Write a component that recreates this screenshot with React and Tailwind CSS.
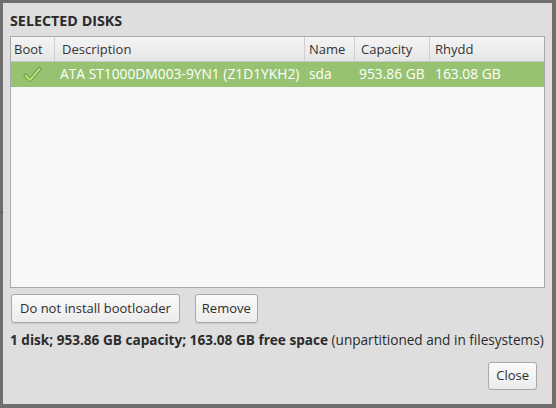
export default function App() {
  const font = { fontFamily: '"Open Sans", "Noto Sans", sans-serif' };
  return (
    <div className="w-[556px] h-[408px] bg-[#6e6e6e] overflow-hidden relative" style={font}>
      <div className="absolute left-0 top-[212px] w-[3px] h-[1px] bg-[#555]" />
      <div className="ml-[3px] mt-[3px] w-[549px] h-[401px] bg-[#dedede] flex flex-col text-[13px] text-[#2e2e2e]">
        <div className="pl-[7px] pt-[8px] h-[33px] font-bold text-[14.3px] leading-[19px] text-[#2b2b2b]">SELECTED DISKS</div>
        <div className="ml-[7px] w-[535px] h-[252px] border border-[#a9a9a9] bg-[#f7f7f7] flex flex-col">
          <div className="flex h-[25px] border-b border-[#c8c8c8] bg-gradient-to-b from-[#f4f4f4] to-[#e6e6e6] text-[#333] leading-[24px]">
            <div className="w-[44px] pl-[3px] border-r border-[#cfcfcf]">Boot</div>
            <div className="w-[250px] pl-[7px] border-r border-[#cfcfcf]">Description</div>
            <div className="w-[50px] pl-[4px] border-r border-[#cfcfcf]">Name</div>
            <div className="w-[75px] pl-[6px] border-r border-[#cfcfcf]">Capacity</div>
            <div className="flex-1 pl-[5px]">Rhydd</div>
          </div>
          <div className="flex h-[25px] bg-[#97c272] text-white leading-[24px] text-[13.8px]">
            <div className="w-[44px] flex items-center pl-[12px]">
              <svg width="19" height="17" viewBox="0 0 19 17">
                <path d="M2.5 9.5 L7 14 L16.5 3" fill="none" stroke="#5f9a3a" strokeWidth="3.8" strokeLinecap="round" strokeLinejoin="round" />
                <path d="M2.5 9.5 L7 14 L16.5 3" fill="none" stroke="#b8e47e" strokeWidth="2" strokeLinecap="round" strokeLinejoin="round" />
              </svg>
            </div>
            <div className="w-[250px] pl-[5px] whitespace-nowrap">ATA ST1000DM003-9YN1 (Z1D1YKH2)</div>
            <div className="w-[50px] pl-[4px]">sda</div>
            <div className="w-[75px] pl-[4px] whitespace-nowrap">953.86 GB</div>
            <div className="flex-1 pl-[5px] whitespace-nowrap">163.08 GB</div>
          </div>
        </div>
        <div className="flex gap-[15px] ml-[8px] mt-[6px]">
          <button className="h-[29px] px-[8px] rounded-[3px] border border-[#a8a8a8] bg-gradient-to-b from-[#fafafa] to-[#ececec] text-[#2e2e2e] shadow-[0_1px_0_rgba(0,0,0,0.08)]">Do not install bootloader</button>
          <button className="h-[29px] px-[6px] rounded-[3px] border border-[#a8a8a8] bg-gradient-to-b from-[#fafafa] to-[#ececec] text-[#2e2e2e] shadow-[0_1px_0_rgba(0,0,0,0.08)]">Remove</button>
        </div>
        <div className="ml-[7px] mt-[8px] leading-[18px] whitespace-nowrap text-[#2b2b2b] text-[13.6px]">
          <span className="font-bold">1 disk; 953.86 GB capacity; 163.08 GB free space</span> (unpartitioned and in filesystems)
        </div>
        <div className="flex justify-end mr-[15px] mt-[13px]">
          <button className="h-[28px] px-[7px] rounded-[3px] border border-[#a8a8a8] bg-gradient-to-b from-[#fafafa] to-[#ececec] text-[#2e2e2e]">Close</button>
        </div>
      </div>
    </div>
  );
}
